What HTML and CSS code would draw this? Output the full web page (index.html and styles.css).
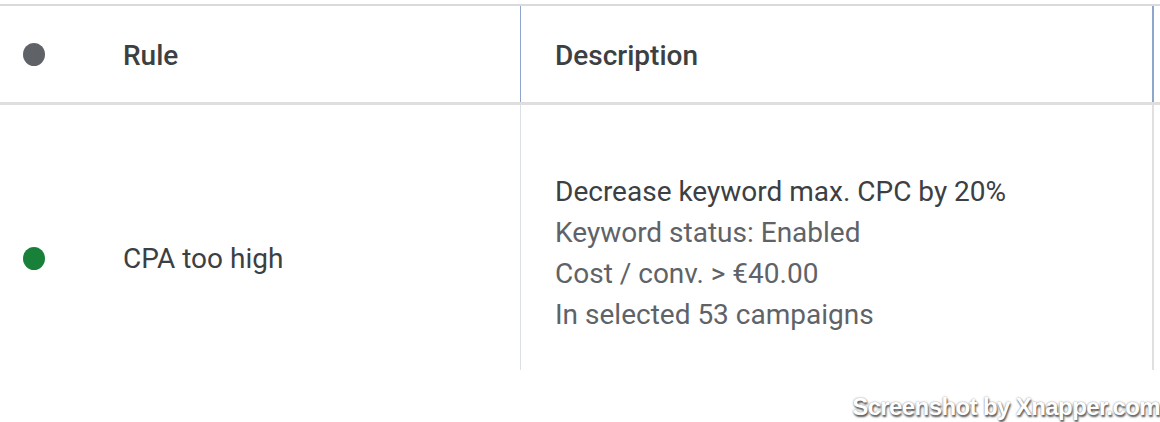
FILE: index.html
```html
<!DOCTYPE html>
<html>
<head>
<meta charset="utf-8">
<link rel="stylesheet" href="styles.css">
</head>
<body>
<div class="page">
  <div class="table">
    <div class="row head">
      <div class="cell rule-cell">
        <span class="dot dot-grey"></span>
        <span class="head-text">Rule</span>
      </div>
      <div class="cell desc-cell head-desc">
        <span class="head-text">Description</span>
      </div>
      <div class="cell tail"></div>
    </div>
    <div class="row body-row">
      <div class="cell rule-cell">
        <span class="dot dot-green"></span>
        <span class="rule-text">CPA too high</span>
      </div>
      <div class="cell desc-cell body-desc">
        <div class="desc">
          <div class="desc-main">Decrease keyword max. CPC by 20%</div>
          <div class="desc-sub">Keyword status: Enabled</div>
          <div class="desc-sub">Cost / conv. &gt; €40.00</div>
          <div class="desc-sub">In selected 53 campaigns</div>
        </div>
      </div>
      <div class="cell tail"></div>
    </div>
  </div>
  <div class="watermark">Screenshot by Xnapper.com</div>
</div>
</body>
</html>
```
FILE: styles.css
```css
* { box-sizing: border-box; }
html, body {
  margin: 0;
  padding: 0;
  background: #ffffff;
}
body {
  font-family: Roboto, "Liberation Sans", Arial, sans-serif;
  width: 1160px;
  height: 422px;
  overflow: hidden;
}
.page {
  position: relative;
  width: 1160px;
  height: 422px;
  padding-top: 4px;
}
.table {
  height: 366px;
  overflow: hidden;
  border-top: 2px solid #dadada;
}
.row {
  display: grid;
  grid-template-columns: 521px 633px 1fr;
}
.head {
  height: 99px;
  border-bottom: 3px solid #dedede;
}
.body-row {
  height: 306px;
}
.cell {
  display: flex;
  align-items: center;
}
.rule-cell {
  padding-left: 23px;
  border-right: 1px solid #dcdfe3;
}
.head .rule-cell {
  border-right-color: #8fa6cc;
}
.desc-cell {
  padding-left: 34px;
  border-right: 2px solid #e0e0e0;
}
.head .desc-cell {
  border-right-color: #8fa6cc;
}
.dot {
  width: 22px;
  height: 23px;
  border-radius: 50%;
  flex: none;
  margin-right: 78px;
}
.dot-grey { background: #5f6368; }
.dot-green { background: #188038; }
.head-text {
  font-size: 28px;
  font-weight: 500;
  color: #3c4043;
  padding-top: 2px;
}
.rule-text {
  font-size: 28px;
  color: #3c4043;
}
.desc {
  font-size: 28px;
  line-height: 41px;
  padding-bottom: 11px;
}
.desc-main { color: #3c4043; }
.desc-sub { color: #5f6368; }
.watermark {
  position: absolute;
  right: 0;
  bottom: 1px;
  font-family: "Liberation Sans", Arial, sans-serif;
  font-weight: 700;
  font-size: 24px;
  letter-spacing: -0.6px;
  color: #ffffff;
  text-shadow: 1px 2px 2px #555555, 0 0 2px #888888;
}
```
